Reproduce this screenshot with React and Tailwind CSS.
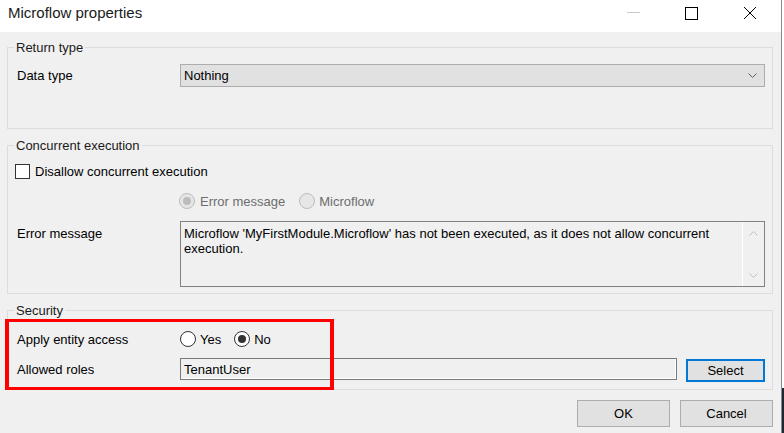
import React from 'react';

const font = { fontFamily: '"Liberation Sans", Arial, sans-serif' };

const Chevron = ({ up, color = '#606060', w = 9, h = 5 }) => (
  <svg width={w} height={h} viewBox="0 0 9 5" fill="none">
    <path d={up ? 'M0.5 4.5 L4.5 0.5 L8.5 4.5' : 'M0.5 0.5 L4.5 4.5 L8.5 0.5'} stroke={color} strokeWidth="1" />
  </svg>
);

const Radio = ({ checked, disabled }) => (
  <span
    className={`w-[16px] h-[16px] rounded-full border flex items-center justify-center shrink-0 ${
      disabled ? 'border-[#bcbcbc] bg-[#e6e6e6]' : 'border-[#333] bg-white'
    }`}
  >
    {checked && <span className={`w-[8px] h-[8px] rounded-full ${disabled ? 'bg-[#bcbcbc]' : 'bg-[#333]'}`} />}
  </span>
);

const Group = ({ title, height, children }) => (
  <div className={`relative border border-[#dcdcdc] ${height}`}>
    <span className="absolute top-[-8px] left-[6px] px-[2px] bg-[#f0f0f0] leading-[15px] text-[#1a1a1a]">{title}</span>
    {children}
  </div>
);

export default function App() {
  return (
    <div className="w-[784px] h-[433px] flex text-[13px] text-black overflow-hidden" style={font}>
      {/* Dialog */}
      <div className="w-[781px] flex flex-col bg-[#f0f0f0] relative">
        {/* Title bar */}
        <div className="h-[32px] bg-white flex items-start shrink-0">
          <span className="pl-[8px] pt-[4px] text-[15px] leading-[18px] text-[#1a1a1a]">Microflow properties</span>
          <div className="ml-auto flex items-start">
            <div className="w-[13px] h-[1px] bg-[#c8c8c8] mt-[12px] mr-[45px]" />
            <div className="w-[13px] h-[13px] border border-black mt-[7px] mr-[45px]" />
            <svg width="14" height="14" viewBox="0 0 14 14" className="mt-[6px] mr-[24px]">
              <path d="M1 1 L13 13 M13 1 L1 13" stroke="#000" strokeWidth="1" />
            </svg>
          </div>
        </div>

        {/* Body */}
        <div className="flex-1 pl-[7px] pr-[8px] pt-[15px] flex flex-col">
          {/* Return type */}
          <Group title="Return type" height="h-[82px]">
            <div className="flex items-center pt-[16px] pl-[9px] pr-[7px]">
              <span className="w-[163px] leading-[15px]">Data type</span>
              <div className="flex-1 h-[23px] bg-[#e1e1e1] border border-[#adadad] flex items-center pl-[3px] pr-[7px]">
                <span className="leading-[15px]">Nothing</span>
                <span className="ml-auto flex"><Chevron /></span>
              </div>
            </div>
          </Group>

          {/* Concurrent execution */}
          <div className="mt-[16px]">
            <Group title="Concurrent execution" height="h-[149px]">
              <div className="flex items-center mt-[17px] pl-[7px] h-[16px]">
                <span className="w-[15px] h-[15px] border border-[#333] bg-white shrink-0" />
                <span className="ml-[5px] leading-[15px]">Disallow concurrent execution</span>
              </div>
              <div className="flex items-center mt-[14px] pl-[171px] h-[16px] text-[#6d6d6d]">
                <Radio checked disabled />
                <span className="ml-[5px] leading-[15px]">Error message</span>
                <span className="ml-[14px]"><Radio disabled /></span>
                <span className="ml-[4px] leading-[15px]">Microflow</span>
              </div>
              <div className="flex items-start mt-[12px] pl-[9px] pr-[7px]">
                <span className="w-[163px] pt-[5px] leading-[15px]">Error message</span>
                <div className="flex-1 h-[66px] border border-[#828282] bg-[#f0f0f0] flex">
                  <div className="flex-1 pl-[3px] pt-[4px] leading-[15px]">
                    Microflow 'MyFirstModule.Microflow' has not been executed, as it does not allow concurrent
                    <br />
                    execution.
                  </div>
                  <div className="w-[22px] border-l border-white flex flex-col items-center justify-between pt-[9px] pb-[8px]">
                    <Chevron up color="#c0c0c0" />
                    <Chevron color="#c0c0c0" />
                  </div>
                </div>
              </div>
            </Group>
          </div>

          {/* Security */}
          <div className="mt-[16px]">
            <Group title="Security" height="h-[80px]">
              <div className="flex items-center mt-[20px] pl-[9px] h-[16px]">
                <span className="w-[163px] leading-[15px]">Apply entity access</span>
                <Radio />
                <span className="ml-[4px] leading-[15px]">Yes</span>
                <span className="ml-[13px]"><Radio checked /></span>
                <span className="ml-[4px] leading-[15px]">No</span>
              </div>
              <div className="flex items-start mt-[11px] pl-[9px] pr-[7px]">
                <span className="w-[163px] h-[22px] flex items-center leading-[15px]">Allowed roles</span>
                <div className="w-[497px] h-[22px] border border-[#7a7a7a] bg-[#f0f0f0] shadow-[inset_-1px_-1px_0_#ffffff] flex items-center pl-[3px]">
                  <span className="leading-[15px]">TenantUser</span>
                </div>
                <button className="ml-[9px] mt-[1px] w-[79px] h-[23px] border-2 border-[#0078d7] bg-[#e1e1e1] flex items-center justify-center leading-[15px]">
                  Select
                </button>
              </div>
            </Group>
          </div>

          {/* Footer buttons */}
          <div className="flex justify-end gap-[10px] mt-[10px]">
            <button className="w-[93px] h-[27px] border border-[#adadad] bg-[#e1e1e1] leading-[15px]">OK</button>
            <button className="w-[93px] h-[27px] border border-[#adadad] bg-[#e1e1e1] leading-[15px]">Cancel</button>
          </div>
        </div>

        {/* Annotation */}
        <div className="absolute left-[5px] top-[319px] w-[329px] h-[71px] border-x-4 border-y-[3px] border-[#ff0000] pointer-events-none" />
      </div>

      {/* Window edge */}
      <div className="w-[1px] bg-[#8a8a8a]" />
      <div className="w-[2px] flex flex-col">
        <div className="flex-1 bg-white" />
        <div className="h-[45px] bg-[#1b2936]" />
      </div>
    </div>
  );
}
